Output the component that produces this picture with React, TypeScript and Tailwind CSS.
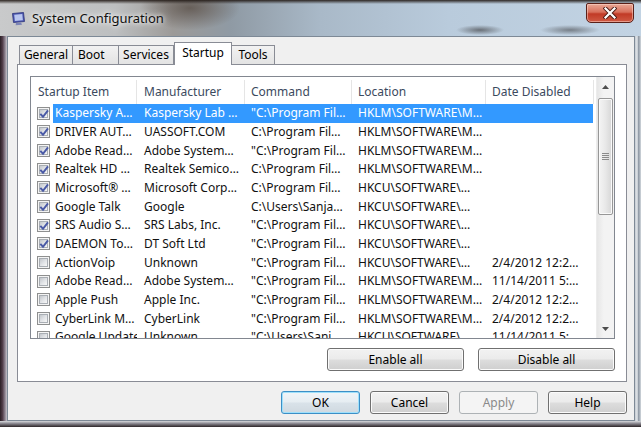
import React from 'react';

type Row = { on: boolean; item: string; maker: string; cmd: string; loc: string; date: string };

const rows: Row[] = [
  { on: true, item: 'Kaspersky A…', maker: 'Kaspersky Lab …', cmd: '"C:\\Program Fil…', loc: 'HKLM\\SOFTWARE\\M…', date: '' },
  { on: true, item: 'DRIVER AUT…', maker: 'UASSOFT.COM', cmd: 'C:\\Program Fil…', loc: 'HKLM\\SOFTWARE\\M…', date: '' },
  { on: true, item: 'Adobe Read…', maker: 'Adobe System…', cmd: '"C:\\Program Fil…', loc: 'HKLM\\SOFTWARE\\M…', date: '' },
  { on: true, item: 'Realtek HD …', maker: 'Realtek Semico…', cmd: 'C:\\Program Fil…', loc: 'HKLM\\SOFTWARE\\M…', date: '' },
  { on: true, item: 'Microsoft® …', maker: 'Microsoft Corp…', cmd: 'C:\\Program Fil…', loc: 'HKCU\\SOFTWARE\\…', date: '' },
  { on: true, item: 'Google Talk', maker: 'Google', cmd: 'C:\\Users\\Sanja…', loc: 'HKCU\\SOFTWARE\\…', date: '' },
  { on: true, item: 'SRS Audio S…', maker: 'SRS Labs, Inc.', cmd: '"C:\\Program Fil…', loc: 'HKCU\\SOFTWARE\\…', date: '' },
  { on: true, item: 'DAEMON To…', maker: 'DT Soft Ltd', cmd: '"C:\\Program Fil…', loc: 'HKCU\\SOFTWARE\\…', date: '' },
  { on: false, item: 'ActionVoip', maker: 'Unknown', cmd: '"C:\\Program Fil…', loc: 'HKCU\\SOFTWARE\\…', date: '2/4/2012 12:2…' },
  { on: false, item: 'Adobe Read…', maker: 'Adobe System…', cmd: '"C:\\Program Fil…', loc: 'HKLM\\SOFTWARE\\M…', date: '11/14/2011 5:…' },
  { on: false, item: 'Apple Push', maker: 'Apple Inc.', cmd: '"C:\\Program Fil…', loc: 'HKLM\\SOFTWARE\\M…', date: '2/4/2012 12:2…' },
  { on: false, item: 'CyberLink M…', maker: 'CyberLink', cmd: '"C:\\Program Fil…', loc: 'HKLM\\SOFTWARE\\M…', date: '2/4/2012 12:2…' },
  { on: false, item: 'Google Update', maker: 'Unknown', cmd: '"C:\\Users\\Sanj…', loc: 'HKCU\\SOFTWARE\\…', date: '11/14/2011 5:…' },
];

const CheckBox = ({ checked }: { checked: boolean }) => (
  <div className="relative w-[13px] h-[13px] border border-[#8e8f8f] bg-[#f4f4f4] p-px">
    <div className="w-full h-full border border-[#a9aeb4] bg-[linear-gradient(135deg,#c3c7cc,#e3e5e8_55%,#f7f7f7)]" />
    {checked && (
      <svg className="absolute left-0 top-0" width="13" height="13" viewBox="0 0 13 13">
        <path d="M2.3 5.9 L5 8.8 L10 2.4" fill="none" stroke="#4a5aa6" strokeWidth="2" />
      </svg>
    )}
  </div>
);

const Btn = ({ label, className }: { label: string; className: string }) => (
  <div className={`h-[23px] flex items-center justify-center rounded-[3px] border text-[12px] ${className}`}>
    {label}
  </div>
);

const normalBtn =
  'border-[#707070] bg-[linear-gradient(to_bottom,#f2f2f2_0%,#ebebeb_48%,#dddddd_52%,#cfcfcf_100%)] shadow-[inset_0_0_0_1px_#fbfbfb] text-black';

export default function App() {
  return (
    <div className="w-[641px] h-[427px] overflow-hidden flex flex-col bg-[#2a2220] font-['Noto_Sans','Liberation_Sans',sans-serif]">
      {/* Title bar over blurred glass */}
      <div className="relative h-[36px] shrink-0 flex items-start bg-[linear-gradient(to_bottom,rgba(38,30,26,0.95)_0px,rgba(38,30,26,0)_4px),radial-gradient(ellipse_24px_5px_at_480px_30px,rgba(70,72,76,0.7),transparent),radial-gradient(ellipse_30px_5px_at_570px_30px,rgba(70,72,76,0.6),transparent),radial-gradient(ellipse_50px_22px_at_190px_8px,rgba(95,85,78,0.85),transparent),linear-gradient(to_right,#c9cacb_0%,#bdbfc0_18%,#9c9a98_27%,#8f9aa4_36%,#a9b9c8_50%,#b9cbdc_70%,#c2d3e3_100%)]">
        <svg className="ml-[11px] mt-[11px]" width="15" height="15" viewBox="0 0 15 15">
          <path d="M1.5 2.5 L12.5 1.5 L13.5 10.5 L2.5 11.5 Z" fill="#4a55b0" stroke="#2c3478" strokeWidth="0.8" />
          <path d="M3.2 3.8 L11.3 3.1 L11.9 9.2 L3.9 9.9 Z" fill="#b9c6ef" />
          <path d="M5 12 L10 11.6 L11 13.8 L4.6 14.2 Z" fill="#7c84b6" />
        </svg>
        <span className="ml-[6px] mt-[9px] text-[13px] text-[#111] [text-shadow:0_0_8px_#fff,0_0_4px_#fff]">
          System Configuration
        </span>
        <div className="ml-auto mr-[7px] mt-[3px] w-[48px] h-[20px] flex items-center justify-center rounded-b-[5px] rounded-t-[2px] border border-[#5a2018] bg-[linear-gradient(to_bottom,#e9a896_0%,#d8705c_45%,#c13a26_55%,#cf5a44_100%)] shadow-[inset_0_0_0_1px_rgba(255,220,210,0.5)]">
          <svg width="14" height="12" viewBox="0 0 14 12">
            <path d="M2.5 1.5 L11.5 10.5 M11.5 1.5 L2.5 10.5" stroke="#4a1a14" strokeWidth="4" strokeLinecap="square" />
            <path d="M2.5 1.5 L11.5 10.5 M11.5 1.5 L2.5 10.5" stroke="#ffffff" strokeWidth="2.2" strokeLinecap="square" />
          </svg>
        </div>
      </div>

      <div className="flex h-[385px] shrink-0">
        {/* left frame */}
        <div className="w-[7px] bg-[linear-gradient(to_right,#2a1f25,#4f3c48_35%,#8a7f8c_70%,#c6c5cc)]" />

        {/* client area */}
        <div className="w-[628px] flex flex-col border border-[#7d8996] bg-[#f0f0f0] pl-[9px] pr-[7px] pt-[6px] pb-[6px]">
          {/* tabs */}
          <div className="h-[21px] shrink-0 flex items-end pl-[2px] text-[12px] text-black">
            <div className="w-[54px] h-[19px] border border-b-0 border-[#898c95] bg-[linear-gradient(to_bottom,#f2f2f2,#e3e3e3)] flex items-center justify-center">General</div>
            <div className="w-[46px] h-[19px] border border-b-0 border-l-0 border-[#898c95] bg-[linear-gradient(to_bottom,#f2f2f2,#e3e3e3)] flex items-center pl-[5px]">Boot</div>
            <div className="w-[55px] h-[19px] border border-b-0 border-l-0 border-[#898c95] bg-[linear-gradient(to_bottom,#f2f2f2,#e3e3e3)] flex items-center justify-center">Services</div>
            <div className="relative z-10 -mb-px w-[58px] h-[23px] border border-b-0 border-[#898c95] bg-white flex items-center justify-center pb-[2px]">Startup</div>
            <div className="w-[43px] h-[19px] border border-b-0 border-l-0 border-[#898c95] bg-[linear-gradient(to_bottom,#f2f2f2,#e3e3e3)] flex items-center justify-center">Tools</div>
          </div>

          {/* tab panel */}
          <div className="h-[318px] shrink-0 border border-[#898c95] bg-white pt-[11px] pl-[12px] pr-[11px] pb-[10px] flex flex-col">
            {/* list view */}
            <div className="h-[263px] shrink-0 border border-[#828790] flex overflow-hidden text-[12px]">
              <div className="w-[565px] flex flex-col overflow-hidden">
                <div className="h-[27px] shrink-0 flex text-[#3b4a5e] pt-[3px]">
                  <div className="w-[106px] pl-[7px] flex items-center border-r border-[#e5e5e5]">Startup Item</div>
                  <div className="w-[108px] pl-[7px] flex items-center border-r border-[#e5e5e5]">Manufacturer</div>
                  <div className="w-[107px] pl-[6px] flex items-center border-r border-[#e5e5e5]">Command</div>
                  <div className="w-[134px] pl-[6px] flex items-center border-r border-[#e5e5e5]">Location</div>
                  <div className="w-[108px] pl-[6px] flex items-center border-r border-[#e5e5e5]">Date Disabled</div>
                </div>
                {rows.map((r, i) => (
                  <div key={i} className="h-[18.67px] shrink-0 flex items-center whitespace-nowrap">
                    <div className="w-[22px] pl-[6px] flex items-center">
                      <CheckBox checked={r.on} />
                    </div>
                    <div className={`w-[540px] h-full flex items-center ${i === 0 ? 'bg-[#3399ff] text-white' : 'text-[#111]'}`}>
                      <div className="w-[84px] pl-[2px] overflow-hidden">{r.item}</div>
                      <div className="w-[108px] pl-[7px] overflow-hidden">{r.maker}</div>
                      <div className="w-[107px] pl-[6px] overflow-hidden">{r.cmd}</div>
                      <div className="w-[134px] pl-[6px] overflow-hidden">{r.loc}</div>
                      <div className="w-[107px] pl-[6px] overflow-hidden">{r.date}</div>
                    </div>
                  </div>
                ))}
              </div>

              {/* scrollbar */}
              <div className="w-[18px] flex flex-col bg-[linear-gradient(to_right,#e6e6e6,#f3f3f3_40%,#f3f3f3)] border-l border-[#ececec]">
                <div className="h-[19px] shrink-0 flex items-center justify-center">
                  <svg width="7" height="4" viewBox="0 0 7 4"><polygon points="0,4 3.5,0 7,4" fill="#4d4d4d" /></svg>
                </div>
                <div className="mt-[2px] mx-[1px] h-[117px] shrink-0 rounded-[2px] border border-[#979797] bg-[linear-gradient(to_right,#f4f4f4,#e8e8e8_50%,#d6d6d6)] shadow-[inset_0_0_0_1px_#fafafa] flex flex-col items-center justify-center gap-[1px]">
                  <div className="w-[7px] h-px bg-[#8a8a8a]" />
                  <div className="w-[7px] h-px bg-[#8a8a8a]" />
                  <div className="w-[7px] h-px bg-[#8a8a8a]" />
                  <div className="w-[7px] h-px bg-[#8a8a8a]" />
                </div>
                <div className="flex-1" />
                <div className="h-[19px] shrink-0 flex items-center justify-center">
                  <svg width="7" height="4" viewBox="0 0 7 4"><polygon points="0,0 7,0 3.5,4" fill="#4d4d4d" /></svg>
                </div>
              </div>
            </div>

            <div className="mt-[9px] flex justify-end gap-[14px]">
              <Btn label="Enable all" className={`w-[137px] ${normalBtn}`} />
              <Btn label="Disable all" className={`w-[137px] ${normalBtn}`} />
            </div>
          </div>

          {/* dialog buttons */}
          <div className="mt-[9px] flex justify-end gap-[10px]">
            <Btn label="OK" className="w-[79px] border-[#3c8fc6] bg-[linear-gradient(to_bottom,#f1f5f8_0%,#e6edf2_48%,#d9e2e9_52%,#d0d9e0_100%)] shadow-[inset_0_0_0_1px_#9fe0fb] text-black" />
            <Btn label="Cancel" className={`w-[79px] ${normalBtn}`} />
            <Btn label="Apply" className="w-[79px] border-[#adb2b5] bg-[#f4f4f4] text-[#8a8a8a]" />
            <Btn label="Help" className={`w-[79px] ${normalBtn}`} />
          </div>
        </div>

        {/* right frame */}
        <div className="w-[6px] bg-[linear-gradient(to_right,#c4cad1,#e2e6ea_35%,#8d97a3_60%,#d3d9de)]" />
      </div>

      {/* bottom frame */}
      <div className="h-[6px] shrink-0 bg-[linear-gradient(to_bottom,#d8dadd,#8e8c94_40%,#2c2528)]" />
    </div>
  );
}
